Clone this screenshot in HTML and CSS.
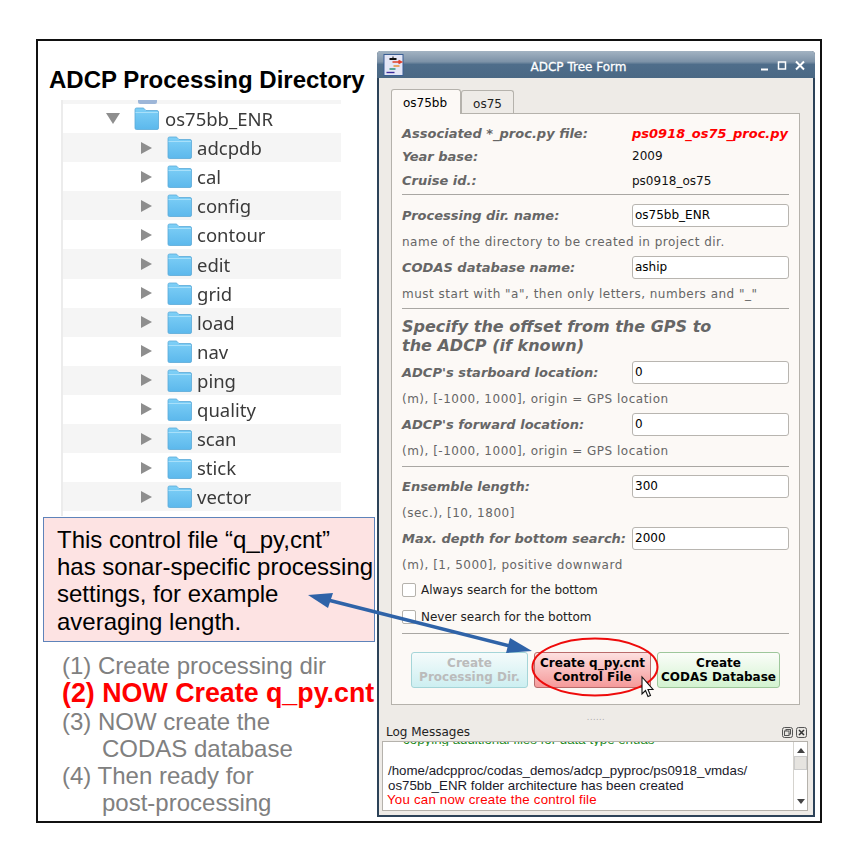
FILE: index.html
```html
<!DOCTYPE html>
<html lang="en">
<head>
<meta charset="utf-8">
<title>ADCP Tree Form</title>
<link rel="stylesheet" href="styles.css">
</head>
<body>
<svg class="defs" width="0" height="0">
  <defs>
    <linearGradient id="fg" x1="0" y1="0" x2="0" y2="1"><stop offset="0" stop-color="#7fd0f7"/><stop offset="1" stop-color="#5cb8ec"/></linearGradient>
    <symbol id="folder" viewBox="0 0 25 23">
      <path d="M1 5V2.500Q1 1 2.500 1H9Q10 1 11 2.500L12 3.500H23Q24.500 3.500 24.500 5V21Q24.500 22.500 23 22.500H2.500Q1 22.500 1 21Z" fill="url(#fg)" stroke="#5aa9d8" stroke-width=".8"/>
      <path d="M1.500 5.500H24" stroke="#a8e0fa" stroke-width="1"/>
    </symbol>
  </defs>
</svg>
<main class="frame">
  <section class="left">
    <h1 class="heading">ADCP Processing Directory</h1>
    <div class="tree">
      <div class="stub"><svg class="stub-icon" viewBox="0 0 25 4"><path d="M3 0H22V2Q22 4 20 4H5Q3 4 3 2Z" fill="#9db6d8"/></svg></div>
      <div class="row parent"><span class="tri-down"></span><svg class="folder"><use href="#folder"/></svg><span>os75bb_ENR</span></div>
      <div class="row child alt"><span class="tri"></span><svg class="folder"><use href="#folder"/></svg><span>adcpdb</span></div>
      <div class="row child"><span class="tri"></span><svg class="folder"><use href="#folder"/></svg><span>cal</span></div>
      <div class="row child alt"><span class="tri"></span><svg class="folder"><use href="#folder"/></svg><span>config</span></div>
      <div class="row child"><span class="tri"></span><svg class="folder"><use href="#folder"/></svg><span>contour</span></div>
      <div class="row child alt"><span class="tri"></span><svg class="folder"><use href="#folder"/></svg><span>edit</span></div>
      <div class="row child"><span class="tri"></span><svg class="folder"><use href="#folder"/></svg><span>grid</span></div>
      <div class="row child alt"><span class="tri"></span><svg class="folder"><use href="#folder"/></svg><span>load</span></div>
      <div class="row child"><span class="tri"></span><svg class="folder"><use href="#folder"/></svg><span>nav</span></div>
      <div class="row child alt"><span class="tri"></span><svg class="folder"><use href="#folder"/></svg><span>ping</span></div>
      <div class="row child"><span class="tri"></span><svg class="folder"><use href="#folder"/></svg><span>quality</span></div>
      <div class="row child alt"><span class="tri"></span><svg class="folder"><use href="#folder"/></svg><span>scan</span></div>
      <div class="row child"><span class="tri"></span><svg class="folder"><use href="#folder"/></svg><span>stick</span></div>
      <div class="row child alt"><span class="tri"></span><svg class="folder"><use href="#folder"/></svg><span>vector</span></div>
    </div>
    <p class="callout">This control file “q_py,cnt”<br>has sonar-specific processing<br>settings, for example<br>averaging length.</p>
    <ol class="steps">
      <li>(1) Create processing dir</li>
      <li class="now">(2) NOW Create q_py.cnt</li>
      <li>(3) NOW create the</li>
      <li class="cont">CODAS database</li>
      <li>(4) Then ready for</li>
      <li class="cont">post-processing</li>
    </ol>
  </section>

  <section class="window">
    <header class="titlebar">
      <svg class="app-icon" viewBox="0 0 20 22">
        <rect x=".5" y=".5" width="19" height="21" fill="#e4e6f6" stroke="#3a5f95"/>
        <path d="M6 4H13V6H6Z" fill="#111"/><path d="M9 2.500H10V4H9Z" fill="#111"/>
        <path d="M9 8H17M15 6.500L18 8L15 9.500" stroke="#e0402a" stroke-width="1.400" fill="none"/>
        <path d="M10 12H16" stroke="#e88a2a" stroke-width="1.400"/>
        <path d="M6 15H12" stroke="#1e8a70" stroke-width="1.400"/>
        <path d="M3 18.500H11" stroke="#3a2a9a" stroke-width="1.400"/>
      </svg>
      <span class="win-title">ADCP Tree Form</span>
      <svg class="win-ctrl" viewBox="0 0 48 12">
        <path d="M2 9.500H9" stroke="#fff" stroke-width="2"/>
        <rect x="19.500" y="2" width="7" height="7" fill="none" stroke="#fff" stroke-width="1.500"/>
        <path d="M37 1.500L45 9.500M45 1.500L37 9.500" stroke="#fff" stroke-width="2"/>
      </svg>
    </header>
    <div class="client">
      <nav class="tabs">
        <span class="tab active">os75bb</span>
        <span class="tab">os75</span>
      </nav>
      <form class="panel">
        <div class="f r22"><label class="lbl">Associated *_proc.py file:</label><b class="val red">ps0918_os75_proc.py</b></div>
        <div class="f r24"><label class="lbl">Year base:</label><span class="val">2009</span></div>
        <div class="f r25"><label class="lbl">Cruise id.:</label><span class="val">ps0918_os75</span></div>
        <hr class="sep s1">
        <div class="f r26"><label class="lbl">Processing dir. name:</label><span class="input">os75bb_ENR</span></div>
        <div class="hint">name of the directory to be created in project dir.</div>
        <div class="f r26"><label class="lbl">CODAS database name:</label><span class="input">aship</span></div>
        <div class="hint">must start with "a", then only letters, numbers and "_"</div>
        <hr class="sep s2">
        <h2 class="sect">Specify the offset from the GPS to<br>the ADCP (if known)</h2>
        <div class="f r26"><label class="lbl">ADCP's starboard location:</label><span class="input">0</span></div>
        <div class="hint">(m), [-1000, 1000], origin = GPS location</div>
        <div class="f r26"><label class="lbl">ADCP's forward location:</label><span class="input">0</span></div>
        <div class="hint">(m), [-1000, 1000], origin = GPS location</div>
        <hr class="sep s3">
        <div class="f r26"><label class="lbl">Ensemble length:</label><span class="input">300</span></div>
        <div class="hint">(sec.), [10, 1800]</div>
        <div class="f r26"><label class="lbl">Max. depth for bottom search:</label><span class="input">2000</span></div>
        <div class="hint">(m), [1, 5000], positive downward</div>
        <div class="check first"><span class="box"></span>Always search for the bottom</div>
        <div class="check"><span class="box"></span>Never search for the bottom</div>
        <hr class="sep s4">
        <div class="buttons">
          <span class="btn cyan">Create<br>Processing Dir.</span>
          <span class="btn pink">Create q_py.cnt<br>Control File</span>
          <span class="btn green">Create<br>CODAS Database</span>
        </div>
      </form>
      <div class="grip">......</div>
      <div class="log-head">
        <span>Log Messages</span>
        <span class="dock">
          <svg viewBox="0 0 11 11"><rect x=".5" y=".5" width="10" height="10" rx="2" fill="#e8e6e2" stroke="#555"/><rect x="4" y="2.500" width="4.500" height="4.500" fill="none" stroke="#555"/><rect x="2.500" y="4" width="4.500" height="4.500" fill="#e8e6e2" stroke="#555"/></svg>
          <svg viewBox="0 0 11 11"><rect x=".5" y=".5" width="10" height="10" rx="2" fill="#e8e6e2" stroke="#555"/><path d="M3 3L8 8M8 3L3 8" stroke="#333" stroke-width="1.500"/></svg>
        </span>
      </div>
      <div class="log">
        <div class="log-text">
          <div class="cut"><span>- copying additional files for data type enuas</span></div>
          <div class="gap">/home/adcpproc/codas_demos/adcp_pyproc/ps0918_vmdas/</div>
          <div>os75bb_ENR folder architecture has been created</div>
          <div class="err">You can now create the control file</div>
        </div>
        <div class="scroll">
          <span class="up"></span>
          <span class="thumb"></span>
          <span class="down"></span>
        </div>
      </div>
    </div>
  </section>

  <svg class="overlay" viewBox="0 0 785 783" aria-hidden="true">
    <ellipse cx="557" cy="626" rx="62.500" ry="28.500" fill="none" stroke="#ee0b0b" stroke-width="2"/>
    <path d="M290 559L472 605" stroke="#2f63a8" stroke-width="3.500" fill="none"/>
    <path d="M270 554L295 552L290 567Z" fill="#2f63a8"/>
    <path d="M494 610L472 597L468 612Z" fill="#2f63a8"/>
    <path d="M604 636V653L607.500 649.500L610 655.500L612.500 654.500L610 648.500H615Z" fill="#fff" stroke="#111" stroke-width="1.100"/>
  </svg>
</main>
</body>
</html>
```

FILE: styles.css
```css
* { box-sizing: border-box; }
html, body { margin: 0; padding: 0; background: #fff; }
body { width: 864px; height: 864px; overflow: hidden; }
.defs { position: absolute; }

.frame {
  position: relative;
  display: flex;
  align-items: flex-start;
  width: 786px;
  height: 784px;
  margin: 39px 0 0 36px;
  border: 2px solid #111;
  font-family: "DejaVu Sans", sans-serif;
}

.left { width: 334px; margin-left: 5px; flex: none; font-family: "Liberation Sans", sans-serif; }
.heading {
  margin: 24px 0 0 6px;
  font-size: 24px;
  line-height: 30px;
  font-weight: bold;
  white-space: nowrap;
  color: #000;
}
.tree {
  width: 280px;
  height: 416px;
  margin: 5px 0 0 18px;
  border-left: 2px solid #ececec;
  font-family: "Noto Sans", sans-serif;
  font-size: 18.500px;
  color: #3a3a3a;
}
.tree span { filter: blur(.3px); }
.stub { height: 4px; background: #f5f5f5; padding-left: 72px; }
.stub-icon { display: block; width: 25px; height: 4px; }
.row { display: flex; align-items: center; height: 29.100px; white-space: nowrap; }
.alt { background: #f5f5f5; }
.parent { padding-left: 43px; }
.child { padding-left: 78px; }
.folder { width: 25px; height: 23px; margin-right: 5px; margin-left: 15px; flex: none; }
.parent .folder { margin-left: 14px; margin-right: 6px; }
.tri { width: 0; height: 0; border-left: 11px solid #8e8e8e; border-top: 6.500px solid transparent; border-bottom: 6.500px solid transparent; }
.tri-down { width: 0; height: 0; border-top: 11px solid #8e8e8e; border-left: 7px solid transparent; border-right: 7px solid transparent; }

.callout {
  width: 332px;
  height: 125px;
  margin: 1px 0 0;
  padding: 8px 0 0 13px;
  border: 1px solid #5e83ba;
  background: #fde3e3;
  color: #000;
  font-size: 24px;
  line-height: 27.200px;
  white-space: nowrap;
}
.steps {
  list-style: none;
  margin: 10px 0 0;
  padding: 0 0 0 19px;
  font-size: 24px;
  line-height: 27.200px;
  color: #808080;
  white-space: nowrap;
}
.now { color: #f00; font-weight: bold; font-size: 26.800px; line-height: 28.400px; }
.cont { padding-left: 40px; }

.window {
  width: 438px;
  height: 766px;
  flex: none;
  margin-top: 10px;
  border: 2px solid #2c4258;
  border-top: 0;
  border-radius: 4px 4px 0 0;
  background: #eeebe7;
  display: flex;
  flex-direction: column;
}
.titlebar {
  position: relative;
  flex: none;
  display: flex;
  align-items: center;
  justify-content: center;
  height: 27px;
  margin: 0 -2px;
  padding: 4px 35px 0 0;
  border-radius: 4px 4px 0 0;
  background: linear-gradient(#a3b3c2 0, #7d92a7 40%, #4f6d8a 50%, #4a6884 100%);
  color: #fff;
  font-size: 12px;
}
.win-title { -webkit-text-stroke: .3px #fff; }
.app-icon { position: absolute; left: 6px; top: 3px; width: 21px; height: 22px; }
.win-ctrl { position: absolute; left: 382px; top: 9px; width: 48px; height: 12px; }

.client { position: relative; flex: 1; display: flex; flex-direction: column; }
.tabs { display: flex; align-items: flex-end; height: 26px; margin: 9px 0 0 12px; position: relative; z-index: 1; }
.tab {
  height: 23px;
  padding: 5px 11px 0;
  border: 1px solid #b5b2ac;
  border-bottom: 0;
  border-radius: 3px 3px 0 0;
  background: #eeebe7;
  font-size: 12px;
  line-height: 16px;
  color: #222;
}
.tab.active { height: 25px; margin-bottom: -1px; padding: 5px 13px 0 11px; background: #fcf9f6; color: #000; }
.panel {
  height: 592px;
  margin: 0 13px 0 12px;
  padding: 8px 10px 0;
  border: 1px solid #b5b2ac;
  background: #fcf9f6;
}
.f { display: flex; align-items: center; font-size: 12px; color: #111; }
.r22 { height: 22px; }
.r24 { height: 24px; }
.r25 { height: 25px; }
.r26 { height: 26px; }
.lbl { width: 230px; flex: none; color: #666; font-weight: bold; font-style: oblique; font-size: 13px; white-space: nowrap; }
.val { white-space: nowrap; }
.red { color: #f00; font-style: oblique; font-size: 13px; }
.input {
  display: block;
  width: 157px;
  height: 23px;
  padding: 0 2px;
  border: 1px solid #b8b5b0;
  border-radius: 3px;
  background: #fff;
  font-size: 12px;
  line-height: 21px;
  color: #000;
}
.sep { height: 1px; margin: 0; border: 0; background: #a9a7a3; }
.s1 { margin: 1px 0 7px; }
.s2 { margin: 2px 0 0; }
.s3 { margin: 3px 0 6px; }
.s4 { margin: 3px 0 0; }
.hint { height: 26px; line-height: 28px; font-size: 12px; letter-spacing: .5px; color: #666; white-space: nowrap; }
.sect { margin: 8px 0 4px; font-size: 16px; line-height: 19px; font-weight: bold; font-style: oblique; color: #666; white-space: nowrap; }
.check { display: flex; align-items: center; height: 27px; font-size: 12px; color: #222; }
.first { margin-top: -1px; }
.box { width: 14px; height: 14px; margin-right: 5px; border: 1px solid #b5b2ac; border-radius: 2px; background: #fff; }
.buttons { display: flex; margin: 18px 0 0 9px; gap: 6px; }
.btn {
  display: block;
  height: 36px;
  padding-top: 3px;
  border: 1px solid #9db;
  border-radius: 3px;
  font-size: 12px;
  line-height: 14px;
  font-weight: bold;
  text-align: center;
  white-space: nowrap;
  color: #000;
}
.cyan { width: 117px; background: linear-gradient(#f5fbfb, #cdeff1); border-color: #a5d5d8; color: #bbb; }
.pink { width: 117px; background: linear-gradient(#fde0e0, #f59a9a); border-color: #b86b6b; }
.green { width: 123px; background: linear-gradient(#fbfdf9, #d3f3d0); border-color: #9ec79b; }

.grip { height: 15px; margin-top: 6px; padding-top: 4px; font-size: 8px; line-height: 6px; text-align: center; color: #aaa; letter-spacing: .5px; }
.log-head { display: flex; justify-content: space-between; align-items: center; height: 16px; margin: -2px 6px 0 7px; font-size: 12px; color: #222; }
.dock { display: flex; gap: 3px; }
.dock svg { width: 11px; height: 11px; display: block; }
.log { display: flex; height: 70px; margin: 1px 5px 0 3px; border: 1px solid #b5b2ac; background: #fff; font-family: "Liberation Sans", sans-serif; font-size: 13.300px; line-height: 14.500px; }
.log-text { flex: 1; overflow: hidden; padding-left: 5px; color: #1a1a2a; white-space: nowrap; }
.cut { height: 4px; overflow: hidden; color: #1c8a1c; }
.cut span { display: block; margin: -9px 0 0 7px; }
.gap { margin-top: 18px; }
.err { color: #f00; margin-left: -1px; letter-spacing: .2px; }
.scroll { width: 14px; display: flex; flex-direction: column; align-items: center; border-left: 1px solid #d5d3ce; background: #fff; }
.up { width: 0; height: 0; margin: 6px 0 3px; border-bottom: 5px solid #444; border-left: 4px solid transparent; border-right: 4px solid transparent; }
.thumb { width: 13px; height: 14px; background: #e6e4e0; border: 1px solid #ccc; }
.down { width: 0; height: 0; margin: auto 0 6px; border-top: 5px solid #444; border-left: 4px solid transparent; border-right: 4px solid transparent; }

.overlay { position: absolute; left: 0; top: 0; width: 785px; height: 783px; pointer-events: none; }
```
